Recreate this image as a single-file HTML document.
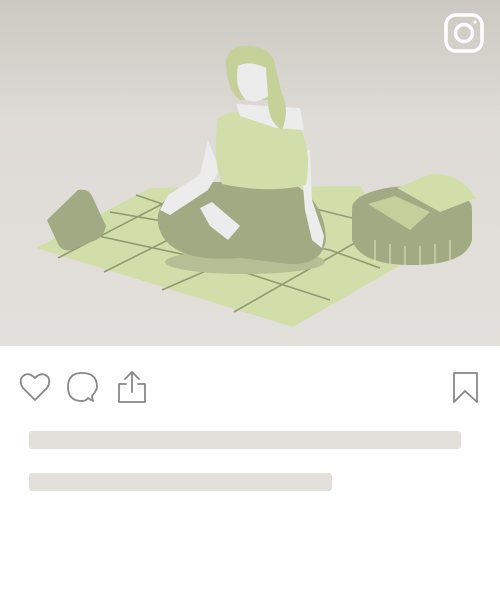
<!DOCTYPE html>
<html><head><style>
html,body{margin:0;padding:0;width:500px;height:600px;background:#fff;overflow:hidden;font-family:"Liberation Sans",sans-serif}
.img{position:absolute;left:0;top:0;width:500px;height:346px;background:linear-gradient(#cbc9c2,#dedbd6 35%,#e3e0dc)}
.bar{position:absolute;left:29px;height:18px;border-radius:3px;background:#e3e0dc}
</style></head><body>
<div class="img">
<svg width="500" height="346" viewBox="0 0 500 346">
 <polygon points="36,248 150,188 360,186 406,262 293,327" fill="#d2dea9"/>
 <g stroke="#8f9a72" stroke-width="1.6" fill="none">
  <path d="M58,258 L170,200"/><path d="M104,272 L220,214"/><path d="M162,290 L300,230"/><path d="M234,312 L360,240"/>
  <path d="M110,212 L330,250 L380,268"/><path d="M70,230 L200,258 L330,300"/><path d="M136,195 L180,210"/><path d="M300,205 L380,225"/>
 </g>
 <ellipse cx="245" cy="262" rx="80" ry="12" fill="#b5be94"/>
 <path d="M47,220 L78,190 Q88,188 92,196 L106,226 Q104,236 96,240 L72,250 Q62,252 58,244 Z" fill="#a2aa84"/>
 <path d="M352,210 L352,240 Q360,265 412,265 Q466,265 472,240 L472,210 Z" fill="#a2aa84"/>
 <ellipse cx="412" cy="208" rx="60" ry="22" fill="#a2aa84"/>
 <g stroke="#dfe6c3" stroke-width="1"><path d="M375,240v22M390,244v20M405,246v20M420,246v20M435,244v20M450,240v20"/></g>
 <path d="M397,188 L430,174 Q460,172 476,198 L440,212 Z" fill="#d2dea9"/>
 <path d="M368,204 L395,196 L430,212 L410,230 Z" fill="#c4cf9c"/>
 <!-- legs -->
 <path d="M158,215 Q162,190 205,182 L290,182 Q325,200 326,240 Q322,265 290,264 L240,258 Q190,262 170,245 Q156,232 158,215 Z" fill="#a2aa84"/>
 <!-- arms -->
 <path d="M208,140 L200,175 L168,195 L160,210 L170,215 L208,190 L220,170 Z" fill="#ececec"/>
 <path d="M300,150 L305,210 L312,240 L322,248 L324,236 L312,200 L310,150 Z" fill="#ececec"/>
 <path d="M200,208 L212,202 L240,226 L228,240 L210,226 Z" fill="#ececec"/>
 <!-- shirt -->
 <path d="M218,118 Q230,110 250,112 L300,128 Q312,150 306,185 Q270,194 222,184 Q212,160 218,118 Z" fill="#d2dea9"/>
 <path d="M236,104 L300,108 L304,130 L276,128 L240,116 Z" fill="#ececec"/>
 <path d="M226,60 Q230,44 250,46 Q275,48 276,70 L282,94 Q290,110 282,130 Q268,122 268,100 L240,100 Q226,90 226,60 Z" fill="#c5d199"/>
 <path d="M238,66 Q250,60 266,68 L268,96 Q258,104 246,100 Q234,88 238,66 Z" fill="#ececec"/>
</svg>
<svg style="position:absolute;left:444px;top:13px" width="40" height="40" viewBox="0 0 40 40" fill="none" stroke="#fff" stroke-width="3.5">
 <rect x="2" y="2" width="36" height="36" rx="10"/><circle cx="20" cy="20" r="8.5"/><circle cx="31" cy="9" r="1.5" fill="#fff" stroke="none"/>
</svg>
</div>
<svg style="position:absolute;left:0;top:360px" width="500" height="60" fill="none" stroke="#888" stroke-width="1.8" stroke-linejoin="round" stroke-linecap="round">
 <path d="M35,40 L23,28 Q19,22 22,17 Q28,11 35,18 Q42,11 48,17 Q51,22 47,28 Z"/>
 <path d="M93,41 Q92,38 92,36 Q97,30 97,27 Q97,13 82,13 Q68,13 68,27 Q68,41 82,41 Q86,41 88,38 Q91,40 93,41 Z"/>
 <path d="M132,13 V32 M125,19 L132,12 L139,19 M126,24 H119 V42 H145 V24 H138"/>
 <path d="M454,13 H477 V42 L465,31 L454,42 Z"/>
</svg>
<div class="bar" style="top:431px;width:432px"></div>
<div class="bar" style="top:473px;width:303px"></div>
</body></html>
